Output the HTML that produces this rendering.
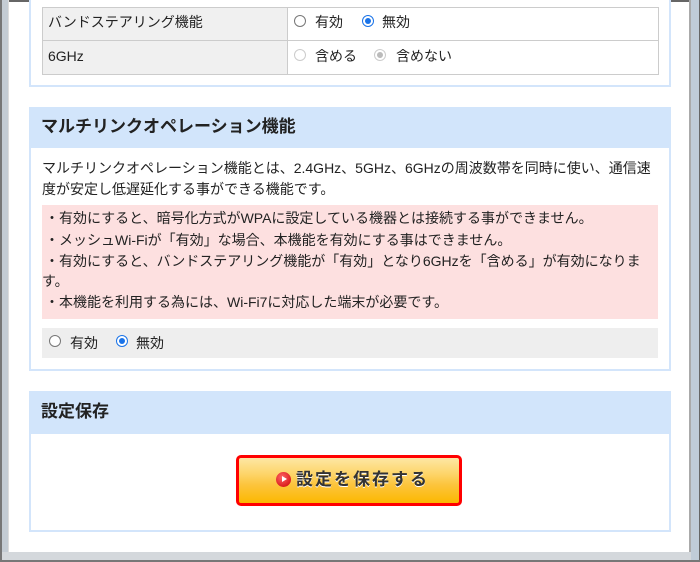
<!DOCTYPE html>
<html><head><meta charset="utf-8"><style>
*{margin:0;padding:0;box-sizing:border-box}
body{width:700px;height:562px;overflow:hidden;background:#fff;position:relative;font-family:"Liberation Sans","Noto Sans CJK JP",sans-serif;color:#222;font-size:14px}
.a{position:absolute;white-space:nowrap;line-height:16px}
.box{position:absolute;border:2px solid #d3e5fb;background:#fff}
.hd{position:absolute;background:#d2e5fb;font-weight:bold;font-size:17px;color:#222;line-height:20px}
.r{position:absolute;width:12px;height:12px;border-radius:50%;border:1px solid #777;background:#fff}
.r.on{border:1px solid #1a73e8}
.r.on::after{content:"";position:absolute;left:2px;top:2px;width:6px;height:6px;border-radius:50%;background:#1a73e8}
.r.dis{border-color:#ccc}
.r.dis.on::after{background:#bbb}
</style></head><body>
<div class="a" style="left:0;top:0;width:700px;height:2px;background:#666"></div>
<div class="a" style="left:0;top:0;width:2px;height:562px;background:#777"></div>
<div class="a" style="left:2px;top:0;width:6px;height:562px;background:#c4ccd4"></div>
<div class="a" style="left:8px;top:0;width:1px;height:552px;background:#ddd"></div>
<div class="a" style="left:689px;top:0;width:2px;height:562px;background:#aaa"></div>
<div class="a" style="left:691px;top:0;width:8px;height:562px;background:#c0ccd8"></div>
<div class="a" style="left:699px;top:0;width:1px;height:562px;background:#666"></div>
<div class="a" style="left:2px;top:552px;width:689px;height:8px;background:#d4d8dc"></div>
<div class="a" style="left:0;top:560px;width:700px;height:2px;background:#777"></div>

<div class="box" style="left:29px;top:-2px;width:642px;height:89px"></div>
<div class="a" style="left:42px;top:7px;width:617px;height:68px;border:1px solid #ccc;background:#fff"></div>
<div class="a" style="left:43px;top:8px;width:245px;height:66px;background:#f0f0f0;border-right:1px solid #ccc"></div>
<div class="a" style="left:43px;top:40px;width:615px;height:1px;background:#ccc"></div>
<div class="a" style="left:48px;top:14px">バンドステアリング機能</div>
<div class="a" style="left:48px;top:48px">6GHz</div>
<div class="r" style="left:294px;top:15px"></div><div class="a" style="left:315px;top:14px">有効</div>
<div class="r on" style="left:362px;top:15px"></div><div class="a" style="left:382px;top:14px">無効</div>
<div class="r dis" style="left:294px;top:49px"></div><div class="a" style="left:315px;top:48px">含める</div>
<div class="r dis on" style="left:374px;top:49px"></div><div class="a" style="left:396px;top:48px">含めない</div>

<div class="box" style="left:29px;top:107px;width:642px;height:264px"></div>
<div class="hd" style="left:29px;top:107px;width:642px;height:41px;padding:10px 0 0 12px">マルチリンクオペレーション機能</div>
<div class="a" style="left:42px;top:160px">マルチリンクオペレーション機能とは、2.4GHz、5GHz、6GHzの周波数帯を同時に使い、通信速</div>
<div class="a" style="left:42px;top:181px">度が安定し低遅延化する事ができる機能です。</div>
<div class="a" style="left:42px;top:205px;width:616px;height:114px;background:#fde0e0"></div>
<div class="a" style="left:45px;top:210px">・有効にすると、暗号化方式がWPAに設定している機器とは接続する事ができません。</div>
<div class="a" style="left:45px;top:232px">・メッシュWi-Fiが「有効」な場合、本機能を有効にする事はできません。</div>
<div class="a" style="left:45px;top:253px">・有効にすると、バンドステアリング機能が「有効」となり6GHzを「含める」が有効になりま</div>
<div class="a" style="left:42px;top:273px">す。</div>
<div class="a" style="left:45px;top:294px">・本機能を利用する為には、Wi-Fi7に対応した端末が必要です。</div>
<div class="a" style="left:42px;top:328px;width:616px;height:30px;background:#eee"></div>
<div class="r" style="left:49px;top:335px"></div><div class="a" style="left:70px;top:335px">有効</div>
<div class="r on" style="left:116px;top:335px"></div><div class="a" style="left:136px;top:335px">無効</div>

<div class="box" style="left:29px;top:391px;width:642px;height:141px"></div>
<div class="hd" style="left:29px;top:391px;width:642px;height:43px;padding:11px 0 0 12px">設定保存</div>
<div class="a" style="left:236px;top:455px;width:226px;height:51px;border:3px solid #f00;border-radius:5px;background:linear-gradient(#fde7a4 0%,#fdd56a 35%,#fcc43c 60%,#fcb800 100%);"></div>
<div class="a" style="left:276px;top:472px;width:15px;height:15px;border-radius:50%;background:radial-gradient(circle at 40% 35%,#f66,#c00)"></div>
<div class="a" style="left:282px;top:476px;width:0;height:0;border-left:5px solid #fff;border-top:3.5px solid transparent;border-bottom:3.5px solid transparent"></div>
<div class="a" style="left:296px;top:471px;font-size:17px;line-height:18px;font-weight:bold;color:#333;letter-spacing:2px;text-shadow:0 1px 0 #fff">設定を保存する</div>
</body></html>
